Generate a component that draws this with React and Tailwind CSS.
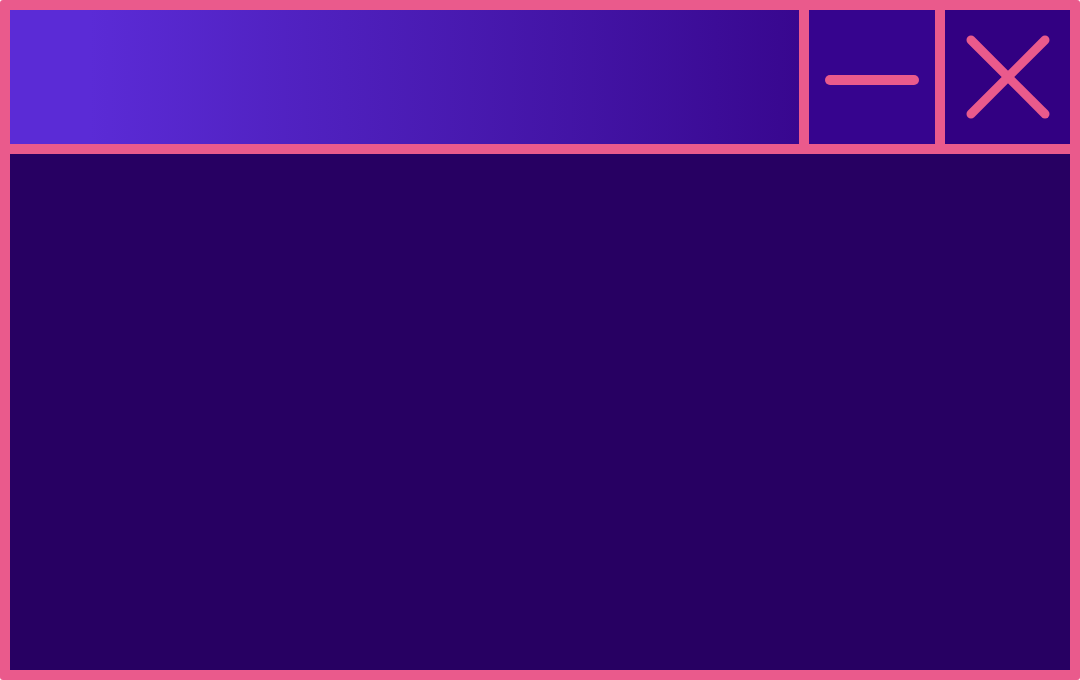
export default function App() {
  return (
    <div className="w-[1080px] h-[680px] bg-[#ea5a8c] p-[10px] rounded-[3px] flex flex-col gap-[10px]">
      <div className="h-[134px] flex gap-[10px]">
        <div className="flex-1 bg-gradient-to-r from-[#5b2bd6] from-10% to-[#38078f]" />
        <button className="w-[126px] bg-[#36048e] flex items-center justify-center pt-[6px]">
          <svg width="96" height="12" viewBox="0 0 96 12">
            <line x1="6" y1="6" x2="90" y2="6" stroke="#ea5a8c" strokeWidth="10" strokeLinecap="round" />
          </svg>
        </button>
        <button className="w-[125px] bg-[#320082] flex items-center justify-center">
          <svg width="84" height="84" viewBox="0 0 84 84">
            <line x1="5" y1="5" x2="79" y2="79" stroke="#ea5a8c" strokeWidth="9" strokeLinecap="round" />
            <line x1="79" y1="5" x2="5" y2="79" stroke="#ea5a8c" strokeWidth="9" strokeLinecap="round" />
          </svg>
        </button>
      </div>
      <div className="flex-1 bg-[#270062]" />
    </div>
  )
}
